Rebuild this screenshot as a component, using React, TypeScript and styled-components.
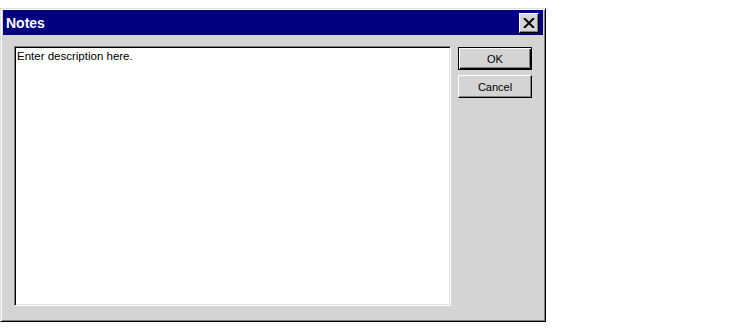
import styled, { createGlobalStyle } from 'styled-components';

const Global = createGlobalStyle`
  body {
    margin: 0;
    background: #fff;
    font-family: "Liberation Sans", Arial, sans-serif;
  }
`;

const Page = styled.div`
  padding-top: 8px;
`;

const Window = styled.div`
  width: 546px;
  height: 314px;
  box-sizing: border-box;
  background: #d4d4d4;
  border-top: 1px solid #dfdfdf;
  border-left: 1px solid #dfdfdf;
  border-right: 1px solid #000;
  border-bottom: 1px solid #000;
  box-shadow: inset 1px 1px 0 #fff, inset -1px -1px 0 #808080;
  padding: 1px 2px 2px 2px;
  display: flex;
  flex-direction: column;
`;

const TitleBar = styled.div`
  height: 25px;
  background: #000080;
  display: flex;
  align-items: center;
  justify-content: space-between;
  padding: 0 4px 0 3px;
`;

const Title = styled.span`
  color: #fff;
  font-weight: bold;
  font-size: 14px;
`;

const CloseButton = styled.button`
  width: 20px;
  height: 20px;
  padding: 0;
  background: #d4d4d4;
  border-top: 1px solid #fff;
  border-left: 1px solid #fff;
  border-right: 1px solid #000;
  border-bottom: 1px solid #000;
  box-shadow: inset -1px -1px 0 #808080;
  display: flex;
  align-items: center;
  justify-content: center;
`;

const Body = styled.div`
  flex: 1;
  display: flex;
  gap: 7px;
  padding: 11px 11px 13px 11px;
`;

const TextArea = styled.div`
  flex: 1;
  background: #fff;
  border-top: 1px solid #808080;
  border-left: 1px solid #808080;
  border-right: 1px solid #fff;
  border-bottom: 1px solid #fff;
  box-shadow: inset 1px 1px 0 #000, inset -1px -1px 0 #dfdfdf;
  padding: 3px 2px;
  font-size: 11.5px;
  color: #000;
`;

const Buttons = styled.div`
  width: 74px;
  display: flex;
  flex-direction: column;
  gap: 5px;
  padding-top: 1px;
`;

const Button = styled.button<{ $default?: boolean }>`
  height: 23px;
  box-sizing: border-box;
  background: #d4d4d4;
  font-family: "Liberation Sans", Arial, sans-serif;
  font-size: 11px;
  color: #000;
  padding: 0;
  border-top: 1px solid #fff;
  border-left: 1px solid #fff;
  border-right: 1px solid #000;
  border-bottom: 1px solid #000;
  box-shadow: inset -1px -1px 0 #808080;
  ${p => p.$default && `
    border: 1px solid #000;
    box-shadow: inset 1px 1px 0 #fff, inset -1px -1px 0 #000, inset -2px -2px 0 #808080;
  `}
`;

export default function App() {
  return (
    <>
      <Global />
      <Page>
        <Window>
          <TitleBar>
            <Title>Notes</Title>
            <CloseButton>
              <svg width="12" height="10" viewBox="0 0 12 10">
                <path d="M1 0 L11 10 M11 0 L1 10" stroke="#000" strokeWidth="2" />
              </svg>
            </CloseButton>
          </TitleBar>
          <Body>
            <TextArea>Enter description here.</TextArea>
            <Buttons>
              <Button $default>OK</Button>
              <Button>Cancel</Button>
            </Buttons>
          </Body>
        </Window>
      </Page>
    </>
  );
}
